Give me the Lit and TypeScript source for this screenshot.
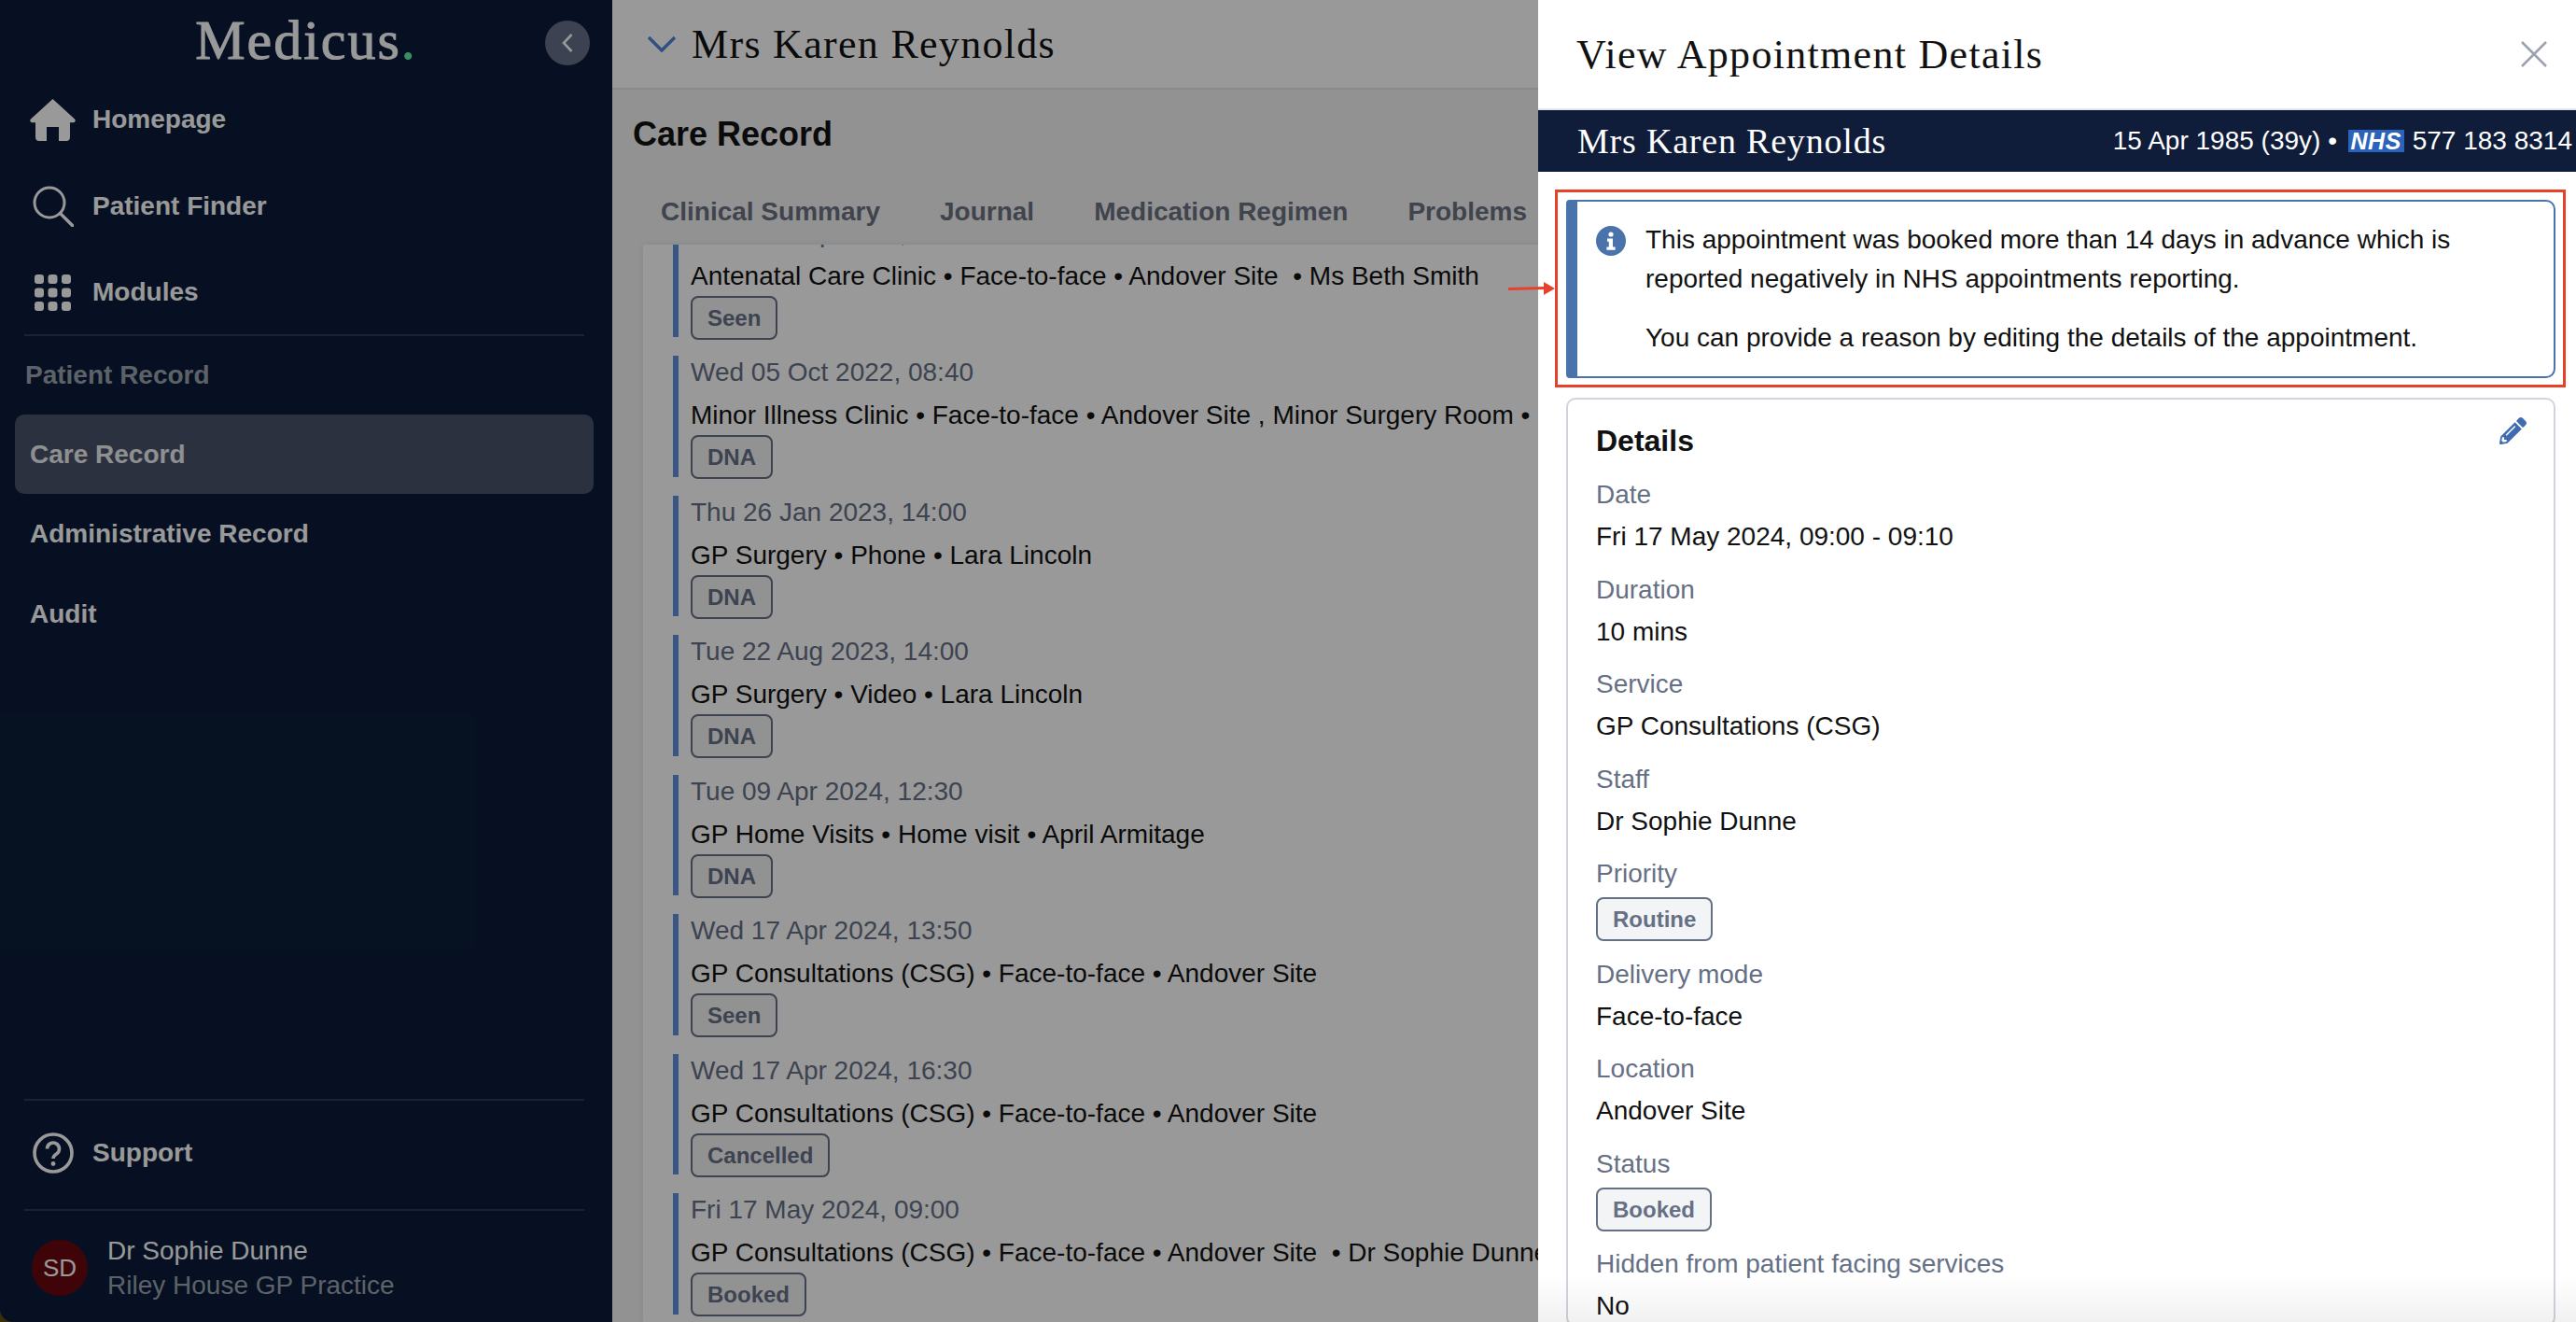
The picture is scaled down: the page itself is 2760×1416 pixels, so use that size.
import { LitElement, css, html, svg } from "lit";
import { customElement } from "lit/decorators.js";

const icons = {
  home: svg`<path d="M24.5 0 L48 21.5 a2.2 2.2 0 0 1 -1.5 3.8 H43 V41 a4 4 0 0 1 -4 4 H31 V30 H18 V45 H10 a4 4 0 0 1 -4 -4 V25.3 H2.5 a2.2 2.2 0 0 1 -1.5 -3.8 Z" fill="currentColor"/>`,
  search: svg`<circle cx="18" cy="18" r="16" fill="none" stroke="currentColor" stroke-width="3"/><path d="M29.5 29.5 L43 43" fill="none" stroke="currentColor" stroke-width="3.4" stroke-linecap="round"/>`,
  help: svg`<circle cx="22" cy="22" r="20" fill="none" stroke="currentColor" stroke-width="3.6"/><path d="M15.5 17.5 a6.5 6.5 0 1 1 10 5.5 c-2.4 1.6 -3.5 2.6 -3.5 5" fill="none" stroke="currentColor" stroke-width="3.6"/><circle cx="22" cy="33.5" r="2.4" fill="currentColor"/>`,
};

const navTop = [
  { label: "Homepage", icon: icons.home, box: "0 0 49 45", w: 49, h: 45 },
  { label: "Patient Finder", icon: icons.search, box: "0 0 44 44", w: 44, h: 44 },
];

const records = ["Care Record", "Administrative Record", "Audit"];

const appointments = [
  { date: "Wed 14 Sep 2022, 09:30", text: "Antenatal Care Clinic • Face-to-face • Andover Site \u00a0• Ms Beth Smith", status: "Seen" },
  { date: "Wed 05 Oct 2022, 08:40", text: "Minor Illness Clinic • Face-to-face • Andover Site , Minor Surgery Room • Dr Sophie Dunne", status: "DNA" },
  { date: "Thu 26 Jan 2023, 14:00", text: "GP Surgery • Phone • Lara Lincoln", status: "DNA" },
  { date: "Tue 22 Aug 2023, 14:00", text: "GP Surgery • Video • Lara Lincoln", status: "DNA" },
  { date: "Tue 09 Apr 2024, 12:30", text: "GP Home Visits • Home visit • April Armitage", status: "DNA" },
  { date: "Wed 17 Apr 2024, 13:50", text: "GP Consultations (CSG) • Face-to-face • Andover Site", status: "Seen" },
  { date: "Wed 17 Apr 2024, 16:30", text: "GP Consultations (CSG) • Face-to-face • Andover Site", status: "Cancelled" },
  { date: "Fri 17 May 2024, 09:00", text: "GP Consultations (CSG) • Face-to-face • Andover Site \u00a0• Dr Sophie Dunne", status: "Booked" },
];

const details = [
  { label: "Date", value: "Fri 17 May 2024, 09:00 - 09:10" },
  { label: "Duration", value: "10 mins" },
  { label: "Service", value: "GP Consultations (CSG)" },
  { label: "Staff", value: "Dr Sophie Dunne" },
  { label: "Priority", badge: "Routine" },
  { label: "Delivery mode", value: "Face-to-face" },
  { label: "Location", value: "Andover Site" },
  { label: "Status", badge: "Booked" },
  { label: "Hidden from patient facing services", value: "No" },
];

@customElement("app-root")
export class AppRoot extends LitElement {
  static styles = css`
    :host {
      display: block;
      width: 100%;
      height: 1416px;
      font-family: "Liberation Sans", Arial, sans-serif;
      font-size: 28px;
      color: #111;
    }

    .shell {
      position: relative;
      display: flex;
      height: 1416px;
      overflow: hidden;
      background: #5e4f0f;
    }

    .scrim {
      position: absolute;
      inset: 0;
      background: rgba(0, 0, 0, 0.4);
    }

    /* sidebar */
    .sidebar {
      flex: 0 0 656px;
      display: flex;
      flex-direction: column;
      background: #0a1c39;
      border-bottom-left-radius: 14px;
      color: #fff;
      font-weight: 700;
    }

    .brand {
      position: relative;
      height: 82px;
      display: flex;
      justify-content: center;
      box-sizing: border-box;
      padding: 8px 0 0 0;
    }

    .logo {
      font-family: "Liberation Serif", serif;
      font-weight: 400;
      font-size: 60px;
      line-height: 70px;
      letter-spacing: 2px;
      -webkit-text-stroke: 1px #fff;
    }

    .logo span {
      color: #62eda5;
      -webkit-text-stroke: 1px #62eda5;
    }

    .collapse {
      position: absolute;
      left: 584px;
      top: 22px;
      width: 48px;
      height: 48px;
      border-radius: 50%;
      background: #646f89;
      display: flex;
      align-items: center;
      justify-content: center;
    }

    .nav-item {
      display: flex;
      align-items: center;
      height: 92.5px;
    }

    .nav-icon {
      flex: 0 0 99px;
      display: flex;
      justify-content: center;
      padding: 0 18px 0 32px;
      box-sizing: border-box;
    }

    .nav-icon svg {
      display: block;
    }

    .divider {
      height: 2px;
      margin: 0 30px 0 26px;
      background: #2b3c55;
    }

    .divider.first {
      margin-top: -2px;
    }

    .section {
      height: 84px;
      line-height: 84px;
      padding-left: 27px;
      color: #9ca3af;
    }

    .record {
      height: 85.5px;
      line-height: 85.5px;
      margin: 0 20px 0 16px;
      padding-left: 16px;
      border-radius: 10px;
    }

    .record.active {
      background: #495368;
      color: #eceef2;
    }

    .spacer {
      flex: 1;
    }

    .support {
      height: 116px;
      box-sizing: border-box;
      padding-bottom: 4px;
    }

    .user {
      display: flex;
      align-items: center;
      gap: 21px;
      height: 119px;
      box-sizing: border-box;
      padding: 3px 0 0 34px;
      font-weight: 400;
    }

    .avatar {
      flex: 0 0 60px;
      height: 60px;
      border-radius: 50%;
      background: #69080d;
      display: flex;
      align-items: center;
      justify-content: center;
      font-size: 26px;
    }

    .user-name {
      line-height: 37px;
    }

    .user-org {
      line-height: 37px;
      color: #9ca3af;
    }

    /* page behind the drawer */
    .main {
      flex: 1;
      min-width: 0;
      display: flex;
      flex-direction: column;
      background: #f3f4f6;
    }

    .patient-bar {
      flex: 0 0 96px;
      box-sizing: border-box;
      display: flex;
      align-items: center;
      gap: 16px;
      padding-left: 37px;
      background: #fff;
      border-bottom: 2px solid #e5e7eb;
    }

    .patient-bar svg {
      display: block;
    }

    .serif {
      font-family: "Liberation Serif", serif;
      font-weight: 400;
      color: #111;
    }

    .patient-name {
      font-size: 44px;
      letter-spacing: 1.3px;
      white-space: nowrap;
    }

    .page-title {
      margin: 25px 0 0 22px;
      font-size: 36px;
      line-height: 46px;
      font-weight: 700;
    }

    .tabs {
      flex: 0 0 70px;
      margin-top: 25px;
      padding-left: 52px;
      display: flex;
      align-items: center;
      gap: 64px;
      font-weight: 700;
      color: #6b7280;
      white-space: nowrap;
    }

    .content {
      flex: 1;
      min-height: 0;
      margin-left: 33px;
      padding-left: 32px;
      background: #fff;
      overflow: hidden;
      box-shadow: 0 0 8px rgba(0, 0, 0, 0.08);
    }

    .list {
      margin-top: -30.5px;
      display: flex;
      flex-direction: column;
      gap: 20px;
    }

    .appt {
      height: 129.5px;
      border-left: 6px solid #6090dc;
      padding-left: 13px;
      white-space: nowrap;
    }

    .appt-date {
      line-height: 36px;
      color: #667085;
    }

    .appt-text {
      margin-top: 8px;
      line-height: 40px;
    }

    .badge {
      display: inline-block;
      box-sizing: border-box;
      height: 47px;
      line-height: 43px;
      padding: 0 16px;
      border: 2px solid #667085;
      border-radius: 8px;
      background: #f3f4f6;
      color: #667085;
      font-size: 24px;
      font-weight: 700;
    }

    .appt .badge {
      display: block;
      width: fit-content;
      margin-top: 1px;
    }

    /* drawer */
    .drawer {
      position: absolute;
      top: 0;
      right: 0;
      bottom: 0;
      width: 1112px;
      background: #fff;
    }

    .drawer-head {
      height: 118px;
      box-sizing: border-box;
      display: flex;
      align-items: center;
      justify-content: space-between;
      padding: 0 30px 0 41px;
      border-bottom: 2px solid #e5e7eb;
    }

    .drawer-title {
      font-size: 44px;
      letter-spacing: 1.3px;
    }

    .drawer-head svg {
      display: block;
    }

    .patient-band {
      height: 66px;
      display: flex;
      align-items: center;
      justify-content: space-between;
      padding: 0 4px 0 42px;
      background: #101d3a;
      color: #fff;
      white-space: nowrap;
    }

    .band-name {
      font-size: 38px;
      letter-spacing: 0.8px;
      color: #fff;
    }

    .band-meta {
      display: flex;
      align-items: center;
      white-space: pre;
    }

    .nhs {
      display: inline-block;
      height: 24px;
      width: 60px;
      margin: 0 9px 0 4px;
      background: #2b62ba;
      color: #fff;
      font-size: 25px;
      font-weight: 700;
      font-style: italic;
      line-height: 24px;
      text-align: center;
      letter-spacing: 0.6px;
    }

    .callout {
      position: relative;
      box-sizing: border-box;
      width: 1083px;
      margin: 19px 0 0 18px;
      padding: 8px 8px 7px 9px;
      border: 3px solid #e8412a;
    }

    .arrow {
      position: absolute;
      left: -53px;
      top: 95px;
      display: block;
    }

    .info {
      display: flex;
      gap: 21px;
      padding: 20px 20px 20px 20px;
      border: 2px solid #4a72ab;
      border-left-width: 12px;
      border-radius: 4px 10px 10px 4px;
    }

    .info svg {
      flex: none;
      display: block;
      margin-top: 6px;
    }

    .info p {
      margin: 0;
      line-height: 42px;
    }

    .info p + p {
      margin-top: 21px;
    }

    .card {
      box-sizing: border-box;
      width: 1060px;
      margin: 11px 0 0 30px;
      padding: 22px 29px 0 30px;
      border: 2px solid #d1d5db;
      border-radius: 10px;
    }

    .card-head {
      display: flex;
      justify-content: space-between;
      align-items: flex-start;
      margin-bottom: 17px;
    }

    .card-head svg {
      display: block;
      margin-top: -3px;
    }

    .card-title {
      font-size: 32px;
      line-height: 44px;
      font-weight: 700;
    }

    .fields {
      display: flex;
      flex-direction: column;
      gap: 17.5px;
    }

    .field-label {
      line-height: 38px;
      color: #667085;
    }

    .field-value {
      margin-top: 6px;
      line-height: 40px;
    }

    .field .badge {
      display: block;
      width: fit-content;
      margin: 6px 0 -1px;
    }

    .fade {
      position: absolute;
      left: 0;
      right: 0;
      bottom: 0;
      height: 50px;
      background: linear-gradient(to bottom, rgba(0, 0, 0, 0), rgba(0, 0, 0, 0.055));
    }
  `;

  private navIcon(icon: unknown, box: string, w: number, h: number) {
    return html`<span class="nav-icon">
      <svg viewBox=${box} width=${w} height=${h}>${icon}</svg>
    </span>`;
  }

  private renderSidebar() {
    return html`
      <aside class="sidebar">
        <div class="brand">
          <div class="logo">Medicus<span>.</span></div>
          <div class="collapse">
            <svg viewBox="0 0 14 22" width="14" height="22">
              <path d="M11.5 2 L3 11 L11.5 20" fill="none" stroke="#fff" stroke-width="2.6" />
            </svg>
          </div>
        </div>
        ${navTop.map(
          (n) => html`<div class="nav-item">${this.navIcon(n.icon, n.box, n.w, n.h)}${n.label}</div>`
        )}
        <div class="nav-item">
          <span class="nav-icon">
            <svg viewBox="0 0 39 39" width="39" height="39" fill="currentColor">
              ${[0, 14.5, 29].map((y) =>
                [0, 14.5, 29].map(
                  (x) => svg`<rect x=${x} y=${y} width="10" height="10" rx="3.2" />`
                )
              )}
            </svg>
          </span>
          Modules
        </div>
        <div class="divider first"></div>
        <div class="section">Patient Record</div>
        ${records.map(
          (r, i) => html`<div class="record ${i === 0 ? "active" : ""}">${r}</div>`
        )}
        <div class="spacer"></div>
        <div class="divider"></div>
        <div class="nav-item support">${this.navIcon(icons.help, "0 0 44 44", 44, 44)}Support</div>
        <div class="divider"></div>
        <div class="user">
          <div class="avatar">SD</div>
          <div>
            <div class="user-name">Dr Sophie Dunne</div>
            <div class="user-org">Riley House GP Practice</div>
          </div>
        </div>
      </aside>
    `;
  }

  private renderMain() {
    return html`
      <main class="main">
        <div class="patient-bar">
          <svg viewBox="0 0 32 18" width="32" height="18">
            <path d="M2 2 L16 16 L30 2" fill="none" stroke="#4f85d8" stroke-width="3.4" />
          </svg>
          <div class="serif patient-name">Mrs Karen Reynolds</div>
        </div>
        <div class="page-title">Care Record</div>
        <div class="tabs">
          <span>Clinical Summary</span>
          <span>Journal</span>
          <span>Medication Regimen</span>
          <span>Problems</span>
        </div>
        <div class="content">
          <div class="list">
            ${appointments.map(
              (a) => html`
                <div class="appt">
                  <div class="appt-date">${a.date}</div>
                  <div class="appt-text">${a.text}</div>
                  <span class="badge">${a.status}</span>
                </div>
              `
            )}
          </div>
        </div>
      </main>
    `;
  }

  private renderDrawer() {
    return html`
      <section class="drawer">
        <div class="drawer-head">
          <div class="serif drawer-title">View Appointment Details</div>
          <svg viewBox="0 0 30 30" width="30" height="30">
            <path d="M2 2 L28 28 M28 2 L2 28" fill="none" stroke="#9ca3af" stroke-width="2.6" />
          </svg>
        </div>
        <div class="patient-band">
          <div class="serif band-name">Mrs Karen Reynolds</div>
          <div class="band-meta">15 Apr 1985 (39y) • <span class="nhs">NHS</span>577 183 8314</div>
        </div>
        <div class="callout">
          <svg class="arrow" viewBox="0 0 50 16" width="50" height="16">
            <path d="M0 8.5 L40 7.5" stroke="#e8412a" stroke-width="2.8" fill="none" />
            <path d="M38 1 L50 8 L38 15 Z" fill="#e8412a" />
          </svg>
          <div class="info">
            <svg viewBox="0 0 32 32" width="32" height="32">
              <circle cx="16" cy="16" r="16" fill="#4a72ab" />
              <circle cx="16" cy="9" r="2.6" fill="#fff" />
              <path d="M12 13.5 h6 v9 h2.6 v3.2 h-9.2 v-3.2 h2.4 v-5.8 h-1.8 Z" fill="#fff" />
            </svg>
            <div>
              <p>This appointment was booked more than 14 days in advance which is reported negatively in NHS appointments reporting.</p>
              <p>You can provide a reason by editing the details of the appointment.</p>
            </div>
          </div>
        </div>
        <div class="card">
          <div class="card-head">
            <div class="card-title">Details</div>
            <svg viewBox="0 0 512 512" width="29" height="29" fill="#3f6cb0">
              <path d="M497.9 142.1l-46.1 46.1c-4.7 4.7-12.3 4.7-17 0l-111-111c-4.7-4.7-4.7-12.3 0-17l46.1-46.1c18.7-18.7 49.1-18.7 67.9 0l60.1 60.1c18.8 18.7 18.8 49.1 0 67.9zM284.2 99.8L21.6 362.4.4 483.9c-2.9 16.4 11.4 30.6 27.8 27.8l121.5-21.3 262.6-262.6c4.7-4.7 4.7-12.3 0-17l-111-111c-4.8-4.7-12.4-4.7-17.1 0zM124.1 339.9c-5.5-5.5-5.5-14.3 0-19.8l154-154c5.5-5.5 14.3-5.5 19.8 0s5.5 14.3 0 19.8l-154 154c-5.5 5.5-14.3 5.5-19.8 0zM88 424h48v36.3l-64.5 11.3-31.1-31.1L51.7 376H88v48z" />
            </svg>
          </div>
          <div class="fields">
            ${details.map(
              (d) => html`
                <div class="field">
                  <div class="field-label">${d.label}</div>
                  ${d.badge
                    ? html`<span class="badge">${d.badge}</span>`
                    : html`<div class="field-value">${d.value}</div>`}
                </div>
              `
            )}
          </div>
        </div>
        <div class="fade"></div>
      </section>
    `;
  }

  render() {
    return html`
      <div class="shell">
        ${this.renderSidebar()} ${this.renderMain()}
        <div class="scrim"></div>
        ${this.renderDrawer()}
      </div>
    `;
  }
}
